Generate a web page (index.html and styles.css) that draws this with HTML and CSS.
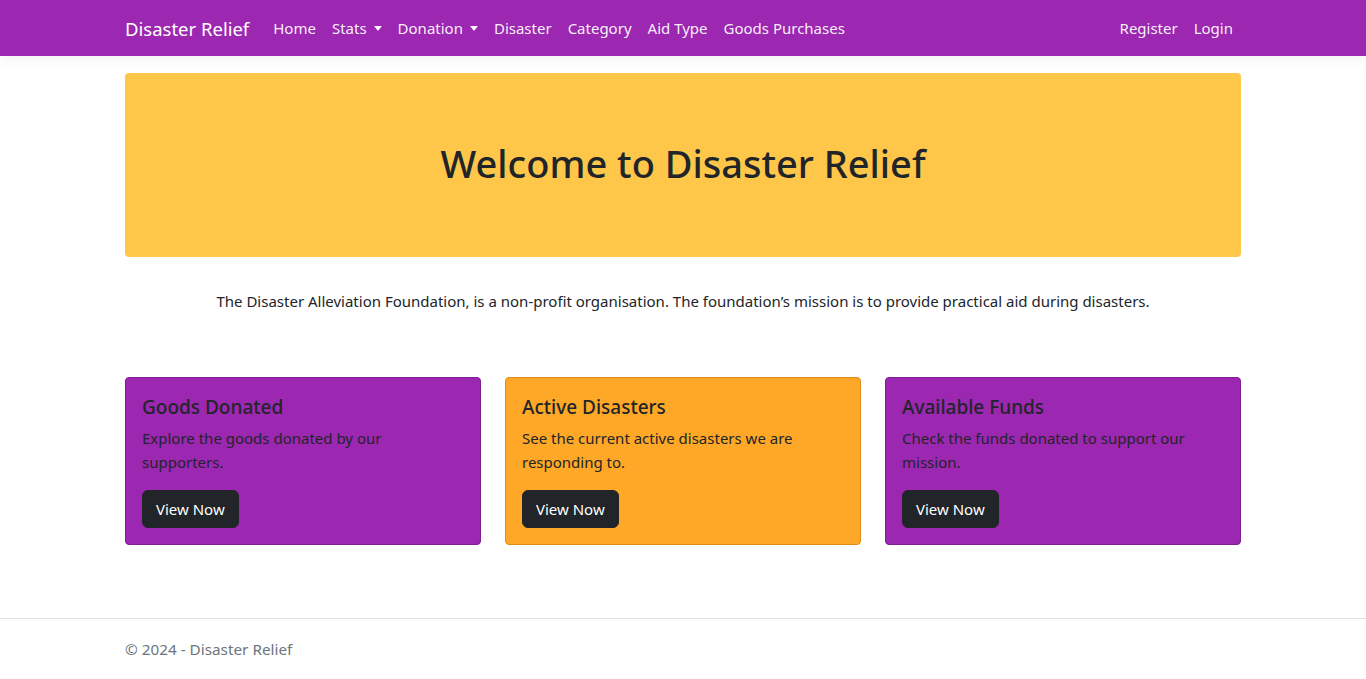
FILE: index.html
```html
<!DOCTYPE html>
<html lang="en">
<head>
<meta charset="utf-8">
<title>Disaster Relief</title>
<link rel="stylesheet" href="styles.css">
</head>
<body>
<header class="navbar">
  <div class="container nav-inner">
    <a class="brand" href="#">Disaster Relief</a>
    <ul class="nav-list">
      <li><a class="nav-link" href="#">Home</a></li>
      <li><a class="nav-link dropdown" href="#">Stats</a></li>
      <li><a class="nav-link dropdown" href="#">Donation</a></li>
      <li><a class="nav-link" href="#">Disaster</a></li>
      <li><a class="nav-link" href="#">Category</a></li>
      <li><a class="nav-link" href="#">Aid Type</a></li>
      <li><a class="nav-link" href="#">Goods Purchases</a></li>
    </ul>
    <ul class="nav-list nav-right">
      <li><a class="nav-link" href="#">Register</a></li>
      <li><a class="nav-link" href="#">Login</a></li>
    </ul>
  </div>
</header>
<main class="container main">
  <section class="hero">
    <h1>Welcome to Disaster Relief</h1>
  </section>
  <p class="intro">The Disaster Alleviation Foundation, is a non-profit organisation. The foundation’s mission is to provide practical aid during disasters.</p>
  <div class="cards">
    <div class="card card-purple">
      <h5 class="card-title">Goods Donated</h5>
      <p class="card-text">Explore the goods donated by our supporters.</p>
      <a class="btn" href="#">View Now</a>
    </div>
    <div class="card card-orange">
      <h5 class="card-title">Active Disasters</h5>
      <p class="card-text">See the current active disasters we are responding to.</p>
      <a class="btn" href="#">View Now</a>
    </div>
    <div class="card card-purple">
      <h5 class="card-title">Available Funds</h5>
      <p class="card-text">Check the funds donated to support our mission.</p>
      <a class="btn" href="#">View Now</a>
    </div>
  </div>
</main>
<footer class="footer">
  <div class="container">© 2024 - Disaster Relief</div>
</footer>
</body>
</html>
```
FILE: styles.css
```css
* { box-sizing: border-box; }
html, body { margin: 0; padding: 0; }
body {
  font-family: "Noto Sans", "Open Sans", sans-serif;
  font-size: 15px;
  line-height: 24px;
  color: #212529;
  background: #fff;
  min-height: 679px;
  display: flex;
  flex-direction: column;
}
a { text-decoration: none; color: inherit; }
.container {
  width: 1140px;
  margin: 0 auto;
  padding: 0 12px;
}
.navbar {
  background: #9c27b0;
  height: 56px;
  box-shadow: 0 4px 12px rgba(0,0,0,.05);
  position: relative;
  z-index: 1;
}
.nav-inner {
  display: flex;
  align-items: center;
  height: 56px;
}
.brand {
  color: #fff;
  font-size: 18.5px;
  line-height: 30px;
  margin-right: 16px;
  padding-top: 1px;
}
.nav-list {
  list-style: none;
  margin: 0;
  padding: 0;
  display: flex;
}
.nav-right { margin-left: auto; }
.nav-link {
  display: block;
  padding: 8px;
  color: rgba(255,255,255,.95);
  line-height: 24px;
}
.dropdown::after {
  content: "";
  display: inline-block;
  margin-left: 7px;
  vertical-align: 3px;
  border-top: 5px solid;
  border-right: 4px solid transparent;
  border-left: 4px solid transparent;
  border-bottom: 0;
}
.main { flex: 1; padding-top: 17px; }
.hero {
  background: #ffc74a;
  border-radius: 4px;
  padding: 64px 32px;
  text-align: center;
}
.hero h1 {
  margin: 0 0 6px;
  font-size: 38px;
  font-weight: 500;
  line-height: 48px;
  padding-top: 2px;
}
.intro {
  text-align: center;
  margin: 32px 0 0;
}
.cards {
  display: grid;
  grid-template-columns: repeat(3, 1fr);
  gap: 24px;
  margin-top: 64px;
}
.card {
  border: 1px solid;
  border-radius: 4px;
  padding: 16px;
}
.card-purple { background: #9c27b0; border-color: #7e1f8f; }
.card-orange { background: #ffa726; border-color: #e08d1a; }
.card-title {
  margin: 0 0 7px;
  font-size: 19px;
  font-weight: 500;
  line-height: 24px;
  padding-top: 1px;
}
.card-text { margin: 0 0 16px; }
.btn {
  display: inline-block;
  background: #212529;
  color: #fff;
  border-radius: 6px;
  padding: 6px 13px;
  line-height: 24px;
  border: 1px solid #212529;
}
.footer {
  border-top: 1px solid #dee2e6;
  height: 61px;
  line-height: 60px;
  font-size: 15.3px;
  color: #6c757d;
}
```
